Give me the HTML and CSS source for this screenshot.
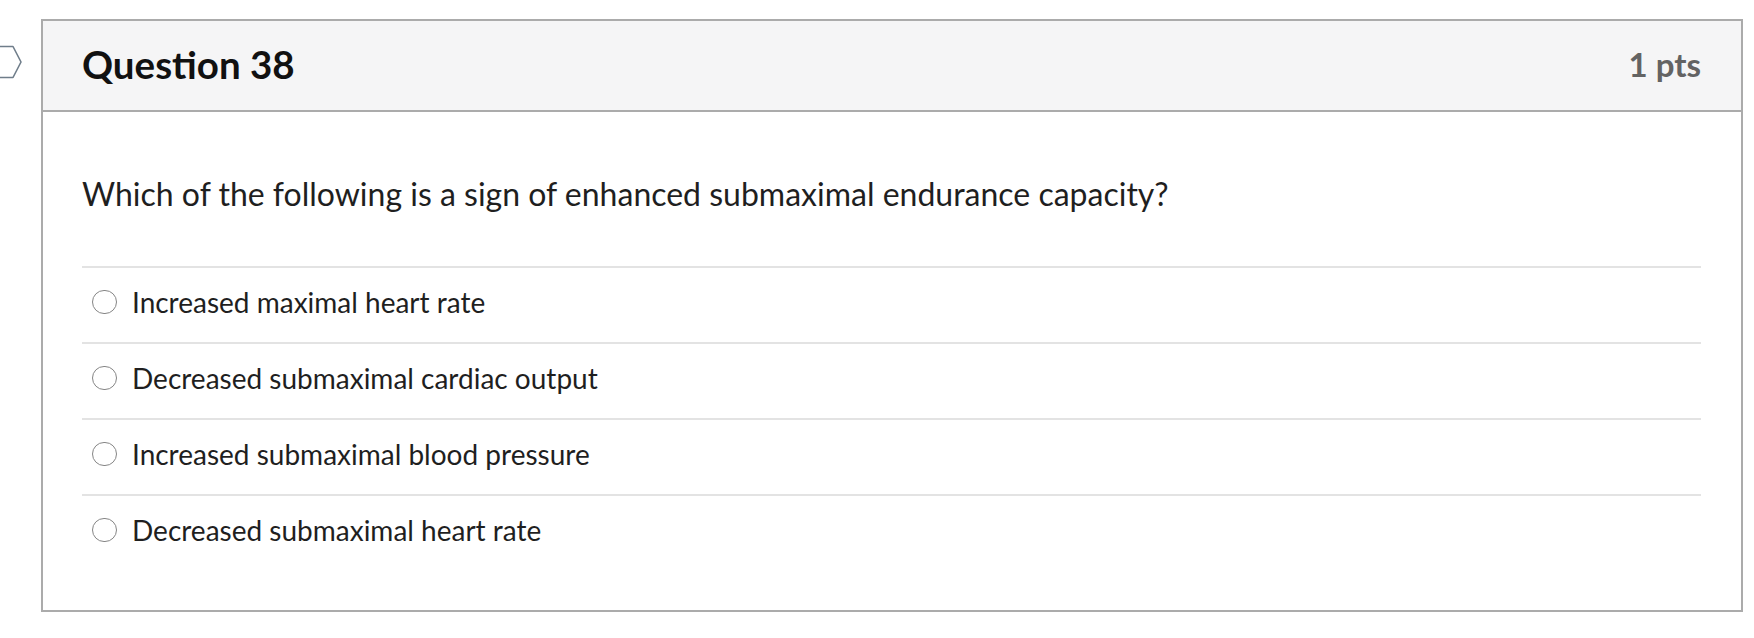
FILE: index.html
```html
<!DOCTYPE html>
<html lang="en">
<head>
<meta charset="utf-8">
<title>Question 38</title>
<link rel="stylesheet" href="styles.css">
</head>
<body>
<div class="page">
  <div class="flag-col">
    <svg class="flag" width="41" height="92" viewBox="0 0 41 92" aria-hidden="true">
      <path d="M-6 27.5 H13 L21 43 L13 58.5 H-6" fill="none" stroke="#6f7d8a" stroke-width="1.6" stroke-linejoin="round"/>
    </svg>
  </div>
  <section class="card">
    <header class="card-header">
      <h2 class="q-title">Question 38</h2>
      <span class="q-pts">1 pts</span>
    </header>
    <div class="card-body">
      <p class="q-text">Which of the following is a sign of enhanced submaximal endurance capacity?</p>
      <ul class="answers">
        <li class="answer"><span class="radio"></span><span class="answer-label">Increased maximal heart rate</span></li>
        <li class="answer"><span class="radio"></span><span class="answer-label">Decreased submaximal cardiac output</span></li>
        <li class="answer"><span class="radio"></span><span class="answer-label">Increased submaximal blood pressure</span></li>
        <li class="answer"><span class="radio"></span><span class="answer-label">Decreased submaximal heart rate</span></li>
      </ul>
    </div>
  </section>
</div>
</body>
</html>
```

FILE: styles.css
```css
html, body {
  margin: 0;
  padding: 0;
  background: #ffffff;
}

body {
  font-family: Lato, "Open Sans", "Liberation Sans", sans-serif;
  color: #2d3b45;
}

.page {
  display: flex;
  align-items: flex-start;
  padding-top: 19px;
}

.flag-col {
  width: 41px;
  flex: 0 0 41px;
  overflow: hidden;
}

.flag {
  display: block;
}

.card {
  border: 2px solid #ababab;
  box-sizing: border-box;
  width: 1702px;
  height: 593px;
  background: #ffffff;
}

.card-header {
  display: flex;
  align-items: center;
  justify-content: space-between;
  box-sizing: border-box;
  height: 91px;
  padding: 0 40px 4px 39px;
  background: #f5f5f6;
  border-bottom: 2px solid #ababab;
}

.q-title {
  margin: 0;
  font-size: 38.5px;
  font-weight: 700;
  color: #111111;
  letter-spacing: 0;
}

.q-pts {
  font-size: 33px;
  font-weight: 700;
  color: #636363;
}

.card-body {
  padding: 0 40px 0 39px;
}

.q-text {
  margin: 0;
  padding-top: 57px;
  padding-bottom: 47px;
  font-size: 32px;
  line-height: 50px;
  color: #1f1f1f;
}

.answers {
  list-style: none;
  margin: 0;
  padding: 0;
}

.answer {
  display: flex;
  align-items: center;
  box-sizing: border-box;
  height: 76px;
  border-top: 2px solid #e3e3e3;
  padding-left: 10px;
  padding-bottom: 6px;
}

.radio {
  width: 22.5px;
  height: 22.5px;
  border: 1.6px solid #858585;
  border-radius: 50%;
  flex: 0 0 auto;
  margin-right: 15.5px;
  box-sizing: content-box;
}

.answer-label {
  font-size: 28px;
  color: #1f1f1f;
}
```
